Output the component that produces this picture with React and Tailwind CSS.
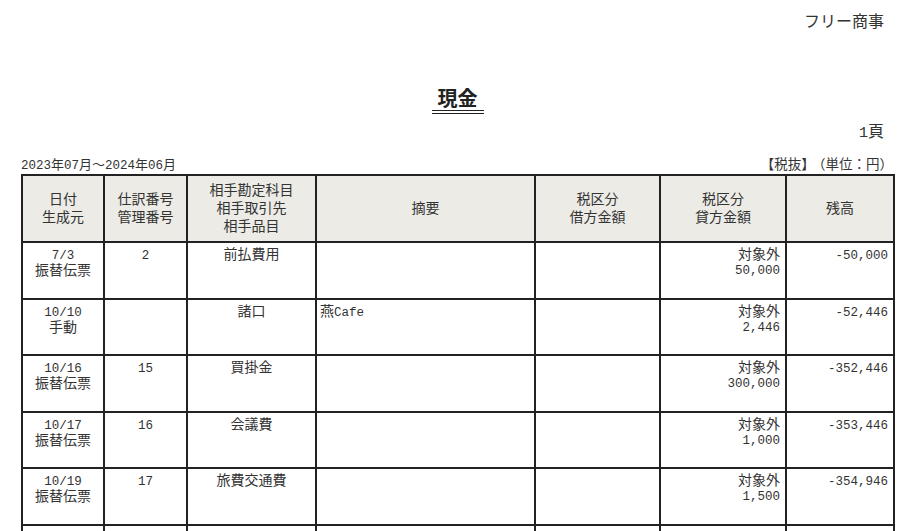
import React from "react";

const rows = [
  { d: "7/3", src: "振替伝票", no: "2", acc: "前払費用", memo: "", cr: "50,000", bal: "-50,000" },
  { d: "10/10", src: "手動", no: "", acc: "諸口", memo: "燕Cafe", cr: "2,446", bal: "-52,446" },
  { d: "10/16", src: "振替伝票", no: "15", acc: "買掛金", memo: "", cr: "300,000", bal: "-352,446" },
  { d: "10/17", src: "振替伝票", no: "16", acc: "会議費", memo: "", cr: "1,000", bal: "-353,446" },
  { d: "10/19", src: "振替伝票", no: "17", acc: "旅費交通費", memo: "", cr: "1,500", bal: "-354,946" },
  { d: "", src: "", no: "", acc: "", memo: "", cr: "", bal: "" },
];

const N = ({ children }) => <span className="text-[12.5px]">{children}</span>;

export default function App() {
  const font = "font-['Liberation_Mono','Noto_Sans_CJK_JP',monospace]";
  const th = "border-2 border-[#222] bg-[#ecebe6] text-center align-middle font-normal text-[14px] leading-[18px] text-[#333]";
  const td = "border-2 border-[#222] align-top pt-[5px] text-[14px] leading-[15px] text-[#333]";
  return (
    <div className={`w-[915px] h-[531px] overflow-hidden bg-white pt-[8px] ${font}`}>
      <div className="pr-[31px] text-right text-[16px] leading-[24px] text-[#333] font-['Noto_Sans_CJK_JP',sans-serif]">
        フリー商事
      </div>
      <div className="mt-[56px] flex justify-center">
        <div className="border-b-[4px] border-double border-[#222] px-[6px] pb-[2px] text-[20px] leading-[20px] font-bold text-[#222] font-['Noto_Sans_CJK_JP',sans-serif]">
          現金
        </div>
      </div>
      <div className="mt-[9px] pr-[31px] text-right text-[16px] leading-[20px] text-[#333]">
        <span className="text-[15px]">1</span>頁
      </div>
      <div className="mt-[14px] ml-[21px] w-[872px] flex justify-between text-[13px] leading-[16px] text-[#333]">
        <span>
          <N>2023</N>年<N>07</N>月～<N>2024</N>年<N>06</N>月
        </span>
        <span className="text-[13.5px]">【税抜】<span className="ml-[4px]">（単位：円）</span></span>
      </div>
      <table className="ml-[21px] w-[872px] table-fixed border-collapse border-2 border-[#222]">
        <colgroup>
          <col className="w-[82px]" />
          <col className="w-[83px]" />
          <col className="w-[129px]" />
          <col className="w-[219px]" />
          <col className="w-[125px]" />
          <col className="w-[126px]" />
          <col className="w-[108px]" />
        </colgroup>
        <thead>
          <tr className="h-[67px]">
            <th className={th}>日付<br />生成元</th>
            <th className={th}>仕訳番号<br />管理番号</th>
            <th className={th}>相手勘定科目<br />相手取引先<br />相手品目</th>
            <th className={th}>摘要</th>
            <th className={th}>税区分<br />借方金額</th>
            <th className={th}>税区分<br />貸方金額</th>
            <th className={th}>残高</th>
          </tr>
        </thead>
        <tbody>
          {rows.map((r, i) => (
            <tr key={i} className="h-[56.6px]">
              <td className={`${td} text-center`}>
                <N>{r.d}</N>
                {r.src && <br />}
                {r.src}
              </td>
              <td className={`${td} text-center`}><N>{r.no}</N></td>
              <td className={`${td} text-center`}>{r.acc}</td>
              <td className={`${td} text-left pl-[3px]`}>
                {r.memo ? (<>燕<N>Cafe</N></>) : null}
              </td>
              <td className={td}></td>
              <td className={`${td} text-right pr-[5px]`}>
                {r.cr && (<>対象外<br /><N>{r.cr}</N></>)}
              </td>
              <td className={`${td} text-right pr-[5px]`}><N>{r.bal}</N></td>
            </tr>
          ))}
        </tbody>
      </table>
    </div>
  );
}
